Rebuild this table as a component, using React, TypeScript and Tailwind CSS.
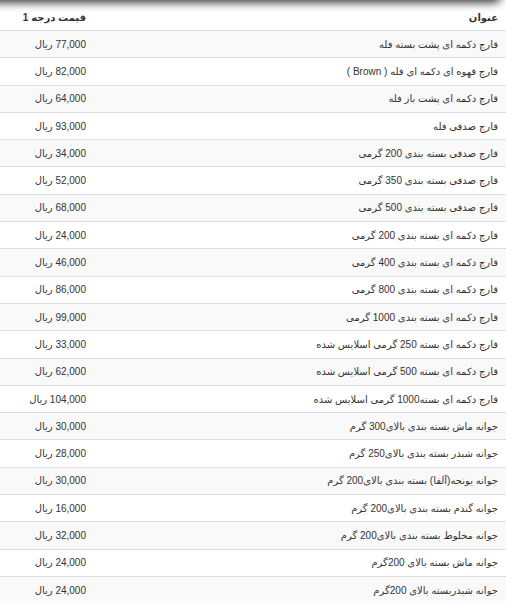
import React from "react";

const rows: [string, string][] = [
  ["قارچ دکمه ای پشت بسته فله", "77,000"],
  ["قارچ قهوه ای دکمه ای فله ( Brown )", "82,000"],
  ["قارچ دکمه ای پشت باز فله", "64,000"],
  ["قارچ صدفی فله", "93,000"],
  ["قارچ صدفی بسته بندی 200 گرمی", "34,000"],
  ["قارچ صدفی بسته بندی 350 گرمی", "52,000"],
  ["قارچ صدفی بسته بندی 500 گرمی", "68,000"],
  ["قارچ دکمه ای بسته بندی 200 گرمی", "24,000"],
  ["قارچ دکمه ای بسته بندی 400 گرمی", "46,000"],
  ["قارچ دکمه ای بسته بندی 800 گرمی", "86,000"],
  ["قارچ دکمه ای بسته بندی 1000 گرمی", "99,000"],
  ["قارچ دکمه ای بسته 250 گرمی اسلایس شده", "33,000"],
  ["قارچ دکمه ای بسته 500 گرمی اسلایس شده", "62,000"],
  ["قارچ دکمه ای بسته1000 گرمی اسلایس شده", "104,000"],
  ["جوانه ماش بسته بندی بالای300 گرم", "30,000"],
  ["جوانه شبدر بسته بندی بالای250 گرم", "28,000"],
  ["جوانه یونجه(آلفا) بسته بندی بالای200 گرم", "30,000"],
  ["جوانه گندم بسته بندی بالای200 گرم", "16,000"],
  ["جوانه مخلوط بسته بندی بالای200 گرم", "32,000"],
  ["جوانه ماش بسته بالای 200گرم", "24,000"],
  ["جوانه شبدربسته بالای 200گرم", "24,000"],
];

export default function App() {
  return (
    <div
      dir="rtl"
      className="relative w-[506px] h-[614px] overflow-hidden bg-white text-[#333] font-['Liberation_Sans','DejaVu_Sans',sans-serif] text-[10px]"
    >
      <div className="absolute top-[-12px] left-[-12px] right-[7px] h-[12px] rounded-br-[6px] shadow-[0_0_9px_3px_rgba(0,0,0,0.75)]" />
      <div className="flex h-[30px] items-center font-bold">
        <div className="flex-1 pr-[8px] pt-[4px]">عنوان</div>
        <div className="w-[94px] pr-[8px] pt-[4px]">قیمت درجه 1</div>
      </div>
      {rows.map(([t, p], i) => (
        <div
          key={i}
          className={
            i % 2 === 0
              ? "flex h-[27.3px] items-center border-t border-[#ddd] bg-[#f9f9f9]"
              : "flex h-[27.3px] items-center border-t border-[#ddd] bg-white"
          }
        >
          <div className="flex-1 pr-[8px]">{t}</div>
          <div className="w-[94px] pr-[8px]">{p} ریال</div>
        </div>
      ))}
    </div>
  );
}
